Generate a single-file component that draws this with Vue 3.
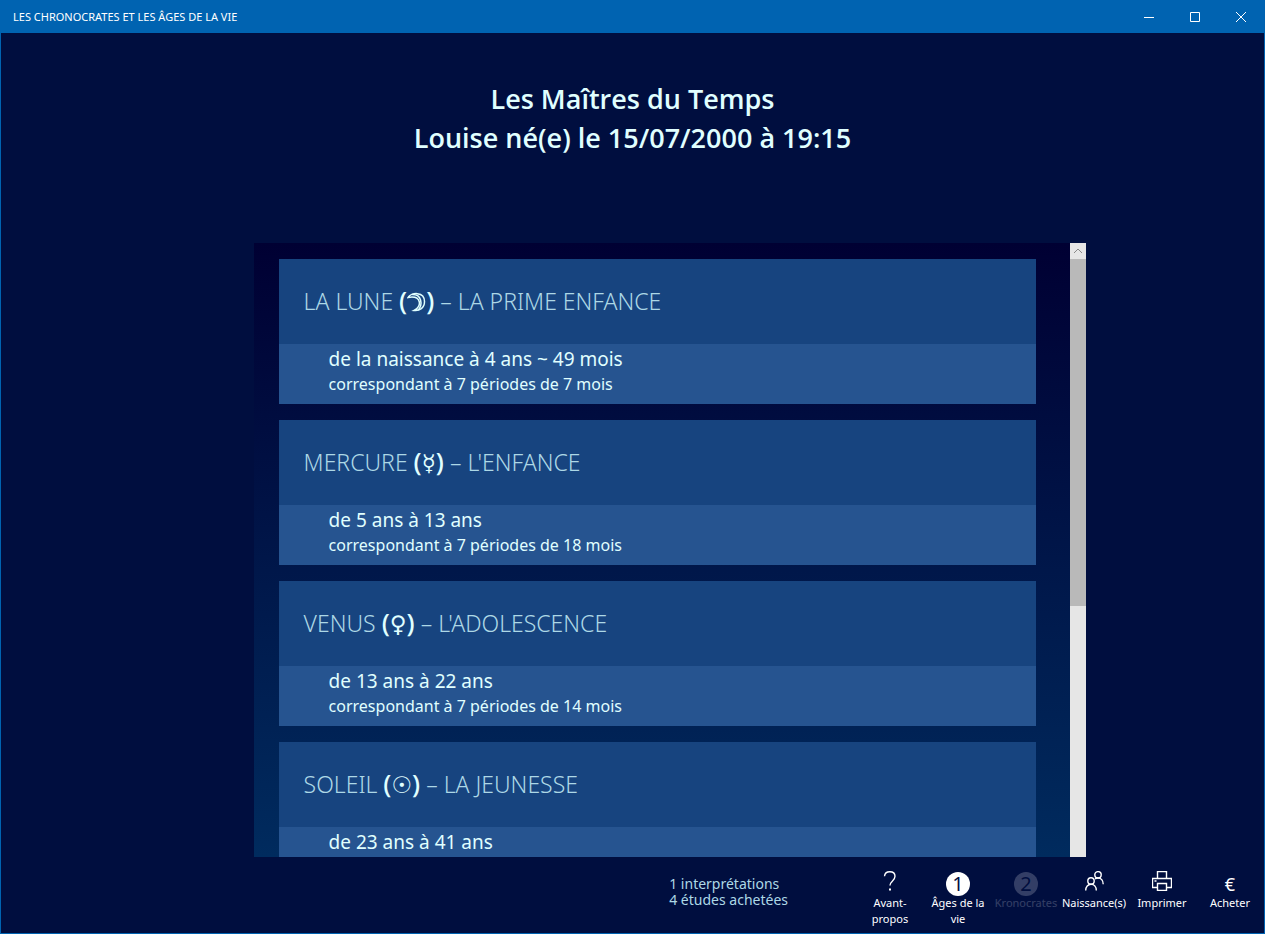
<template>
  <div class="window">
    <header class="title-bar">
      <span class="app-name">LES CHRONOCRATES ET LES ÂGES DE LA VIE</span>
      <div class="window-controls">
        <button type="button" aria-label="Réduire">
          <svg width="10" height="10" viewBox="0 0 10 10"><path d="M0 5.5h10" /></svg>
        </button>
        <button type="button" aria-label="Agrandir">
          <svg width="10" height="10" viewBox="0 0 10 10"><path d="M.5.5h9v9h-9z" /></svg>
        </button>
        <button type="button" aria-label="Fermer">
          <svg width="10" height="10" viewBox="0 0 10 10"><path d="M0 0l10 10M10 0L0 10" /></svg>
        </button>
      </div>
    </header>

    <div class="heading">
      <h1>Les Maîtres du Temps<br />Louise né(e) le 15/07/2000 à 19:15</h1>
    </div>

    <main class="panel">
      <div class="ages">
        <article v-for="age in ages" :key="age.planet" class="age">
          <h2>
            {{ age.planet }}
            <b>(<svg v-if="age.symbol === 'moon'" class="moon" width="19" height="20" viewBox="0 0 19 20" role="img" aria-label="Lune"><path d="M1 5.500C4 .2 17.500-.8 17.500 9.500c0 6.500-5 9.700-10.500 9C15 15 15 3 1 5.500z" /><path d="M5 2.500C15 2 16 13 11 18" /></svg><span v-else class="symbol">{{ age.symbol }}</span>)</b>
            – {{ age.name }}
          </h2>
          <div class="age-body">
            <p class="range">{{ age.range }}</p>
            <p class="periods">{{ age.periods }}</p>
          </div>
        </article>
      </div>
      <div class="scrollbar">
        <button type="button" class="scroll-up" aria-label="Défiler vers le haut">
          <svg width="10" height="6" viewBox="0 0 10 6"><path d="M1 5l4-4 4 4" /></svg>
        </button>
        <div class="thumb"></div>
      </div>
    </main>

    <footer class="command-bar">
      <p class="status">1 interprétations<br />4 études achetées</p>
      <nav class="commands">
        <button v-for="c in commands" :key="c.label" type="button" :disabled="c.disabled">
          <span class="icon">
            <svg v-if="c.icon === 'help'" width="20" height="20" viewBox="0 0 20 20">
              <path d="M4.5 5.2C4.7 2.2 7 .7 9.8 .7c3 0 5.2 1.7 5.2 4.6 0 4.5-5 4.7-5 9.2" />
              <path class="solid" d="M9 17.6h2v2H9z" />
            </svg>
            <svg v-else-if="c.icon === 'people'" width="20" height="20" viewBox="0 0 20 20">
              <circle cx="7" cy="10" r="3.2" />
              <path d="M1.7 19.4c0-3.6 2.2-6.2 5.3-6.2s5.3 2.6 5.3 6.2" />
              <circle cx="14" cy="3.8" r="3.2" />
              <path d="M11 7.8c1-.6 2-.8 3-.8 3.1 0 5.2 2.5 5.2 6.2" />
            </svg>
            <svg v-else-if="c.icon === 'print'" width="20" height="20" viewBox="0 0 20 20">
              <path d="M5.5 7.500v-7h9v7M5.5 16.5h-5v-9h19v9h-5M5.5 12.5h9v7h-9zM2.5 10h2" />
            </svg>
            <span v-else-if="c.icon === 'euro'" class="euro">€</span>
            <span v-else class="number">{{ c.icon }}</span>
          </span>
          <span class="label">{{ c.label }}</span>
        </button>
      </nav>
    </footer>
  </div>
</template>

<script setup>
const ages = [
  {
    planet: 'LA LUNE',
    symbol: 'moon',
    name: 'LA PRIME ENFANCE',
    range: 'de la naissance à 4 ans ~ 49 mois',
    periods: 'correspondant à 7 périodes de 7 mois',
  },
  {
    planet: 'MERCURE',
    symbol: '☿',
    name: "L'ENFANCE",
    range: 'de 5 ans à 13 ans',
    periods: 'correspondant à 7 périodes de 18 mois',
  },
  {
    planet: 'VENUS',
    symbol: '♀',
    name: "L'ADOLESCENCE",
    range: 'de 13 ans à 22 ans',
    periods: 'correspondant à 7 périodes de 14 mois',
  },
  {
    planet: 'SOLEIL',
    symbol: '☉',
    name: 'LA JEUNESSE',
    range: 'de 23 ans à 41 ans',
    periods: '',
  },
]

const commands = [
  { icon: 'help', label: 'Avant-propos' },
  { icon: '1', label: 'Âges de la vie' },
  { icon: '2', label: 'Kronocrates', disabled: true },
  { icon: 'people', label: 'Naissance(s)' },
  { icon: 'print', label: 'Imprimer' },
  { icon: 'euro', label: 'Acheter' },
]
</script>

<style>
body {
  margin: 0;
  background: #000e3f;
}
</style>

<style scoped>
* {
  box-sizing: border-box;
}

.window {
  display: flex;
  flex-direction: column;
  height: 100vh;
  overflow: hidden;
  border: 1px solid #0063b1;
  background: #000e3f;
  color: #e0ffff;
  font-family: 'Noto Sans', 'Open Sans', sans-serif;
}

h1,
h2,
p {
  margin: 0;
}

button {
  padding: 0;
  border: 0;
  background: none;
  color: inherit;
  font: inherit;
}

svg {
  display: block;
  fill: none;
  stroke: currentColor;
}

.title-bar {
  display: flex;
  flex: none;
  justify-content: space-between;
  align-items: center;
  height: 32px;
  padding-left: 12px;
  background: #0063b1;
  color: #ffffff;
}

.app-name {
  font-size: 11px;
  line-height: 16px;
}

.window-controls {
  display: flex;
  align-self: stretch;
}

.window-controls button {
  display: grid;
  place-items: center;
  width: 46px;
}

.heading {
  flex: none;
  height: 210px;
  padding-top: 46px;
  text-align: center;
}

h1 {
  font-family: 'Open Sans', sans-serif;
  font-size: 27px;
  font-weight: 600;
  line-height: 39px;
}

.panel {
  display: flex;
  flex: 1;
  min-height: 0;
  margin: 0 178px 0 20%;
  background: linear-gradient(#000033, #002b5e);
}

.ages {
  flex: 1;
  padding: 16px 34px 0 25px;
  overflow: hidden;
}

.age {
  margin-bottom: 16px;
  background: #265490;
}

h2 {
  height: 85px;
  padding: 26px 25px;
  background: #17447f;
  color: #add8e6;
  font-size: 23px;
  font-weight: 300;
  line-height: 32px;
}

h2 b {
  color: #e0ffff;
  font-size: 26px;
  font-weight: 500;
  line-height: 24px;
}

.symbol {
  font-family: 'DejaVu Sans', sans-serif;
  font-size: 23px;
  font-weight: 400;
}

.moon {
  display: inline-block;
  vertical-align: -2px;
  stroke-width: 1.5;
}

.age-body {
  height: 60px;
  padding: 2px 50px 0;
}

.range {
  font-size: 19px;
  line-height: 26px;
}

.periods {
  font-size: 16px;
  line-height: 24px;
}

.scrollbar {
  flex: none;
  width: 16px;
  background: #e6e6e6;
}

.scroll-up {
  display: grid;
  place-items: center;
  width: 16px;
  height: 16px;
  color: #8a8a8a;
}

.thumb {
  height: 58%;
  max-height: 347px;
  background: #b9b9b9;
}

.command-bar {
  display: flex;
  flex: none;
  justify-content: flex-end;
  height: 76px;
}

.status {
  padding-top: 19px;
  margin-right: 68px;
  color: #add8e6;
  font-size: 14px;
  line-height: 16px;
}

.commands {
  display: flex;
  color: #ffffff;
}

.commands button {
  display: flex;
  flex-direction: column;
  align-items: center;
  width: 68px;
  padding-top: 14px;
}

.commands button:disabled {
  opacity: 0.2;
}

.icon {
  display: grid;
  place-items: center;
  height: 24px;
}

.icon svg {
  stroke-width: 1.4;
  margin-bottom: 4px;
}

.icon .solid {
  fill: currentColor;
  stroke: none;
}

.number {
  width: 24px;
  height: 24px;
  margin-top: 1px;
  border-radius: 50%;
  background: #ffffff;
  color: #000e3f;
  font-size: 20px;
  line-height: 24px;
}

.euro {
  margin-top: 1px;
  font-size: 18px;
  line-height: 24px;
}

.label {
  font-size: 11px;
  line-height: 16px;
}
</style>
